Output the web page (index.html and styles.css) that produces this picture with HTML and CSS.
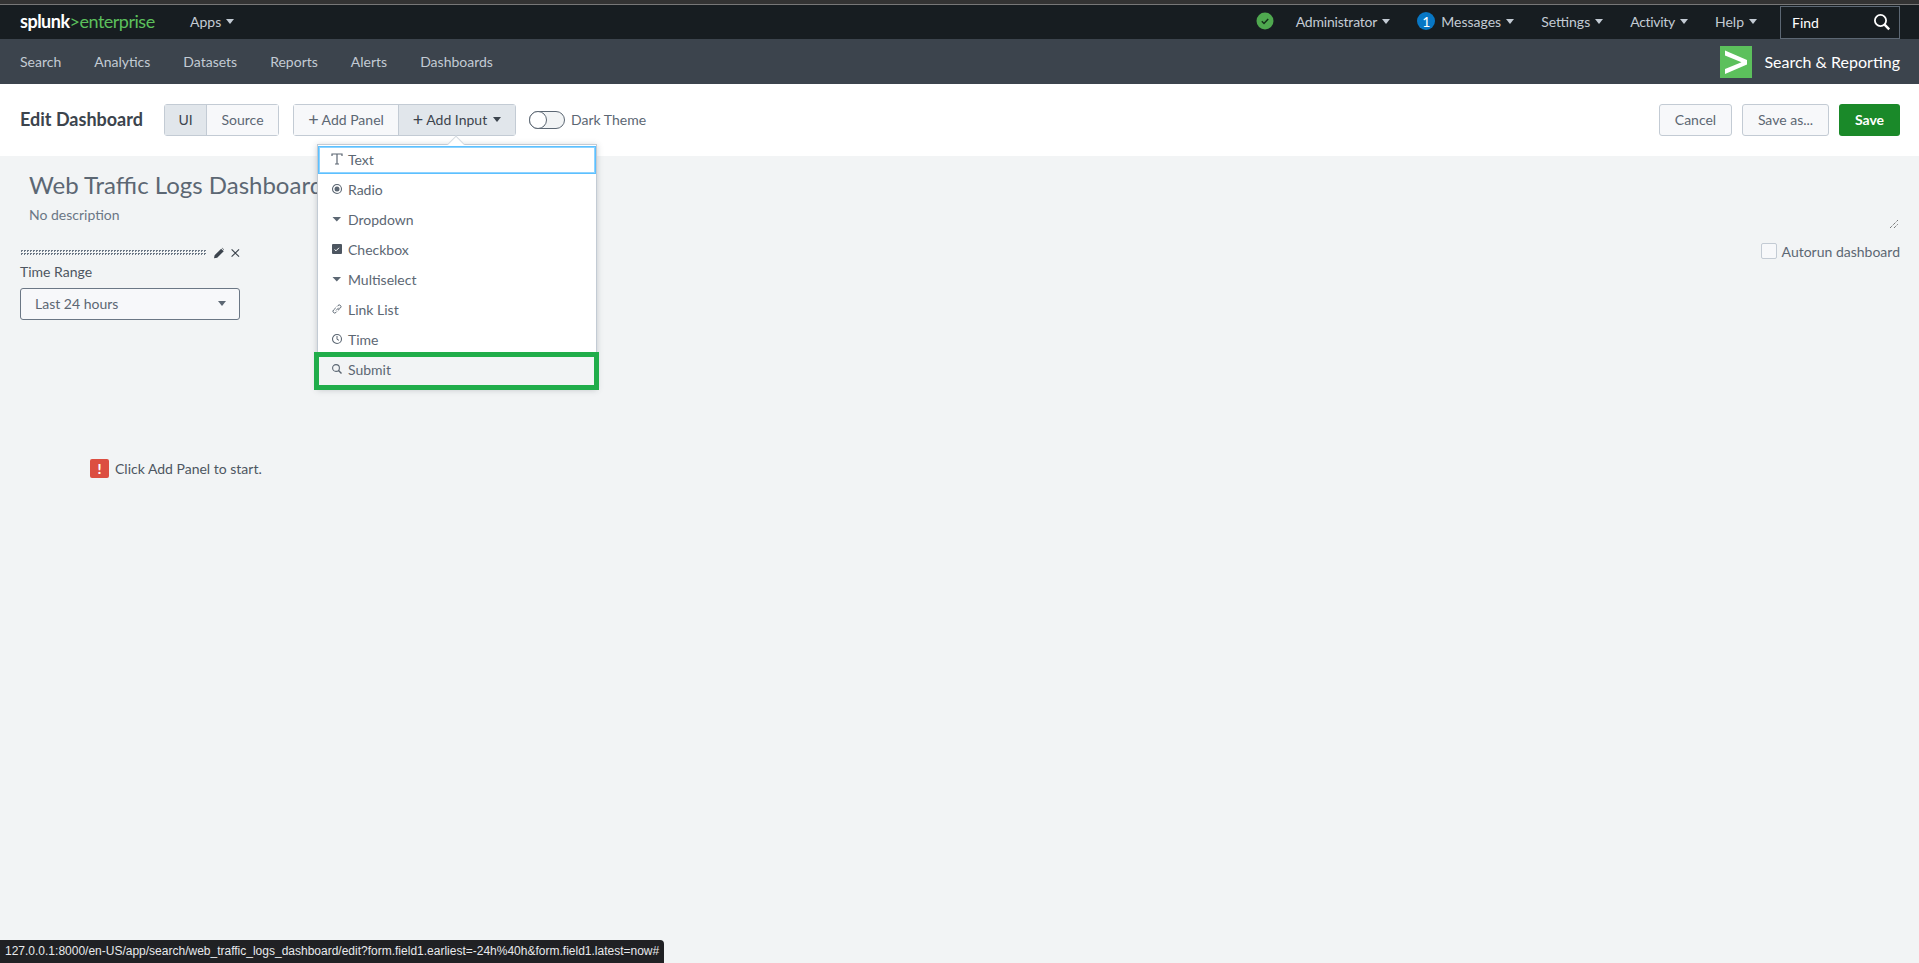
FILE: index.html
```html
<!DOCTYPE html>
<html lang="en">
<head>
<meta charset="utf-8">
<title>Edit Dashboard | Splunk</title>
<link rel="stylesheet" href="styles.css">
</head>
<body>
<div class="strip"></div>
<header class="nav">
  <div class="logo"><span class="logo-s">splunk</span><span class="logo-e">&gt;enterprise</span></div>
  <a class="nav-item apps">Apps <i class="caret"></i></a>
  <div class="nav-right">
    <span class="status"><svg viewBox="0 0 18 18" width="18" height="18"><circle cx="9" cy="9" r="8.5" fill="#4fa84f"/><path d="M5.8 9.3l2.2 2.2 4.2-4.6" fill="none" stroke="#14301a" stroke-width="1.5"/></svg></span>
    <a class="nav-item admin">Administrator <i class="caret"></i></a>
    <a class="nav-item"><span class="badge">1</span>Messages <i class="caret"></i></a>
    <a class="nav-item">Settings <i class="caret"></i></a>
    <a class="nav-item tight">Activity <i class="caret"></i></a>
    <a class="nav-item">Help <i class="caret"></i></a>
    <div class="find"><span>Find</span><svg viewBox="0 0 18 18" width="18" height="18"><circle cx="7.5" cy="7.5" r="5.6" fill="none" stroke="#fff" stroke-width="1.8"/><path d="M11.6 11.6l4.6 4.8" stroke="#fff" stroke-width="2.4"/></svg></div>
  </div>
</header>
<nav class="appbar">
  <a class="app-link">Search</a>
  <a class="app-link">Analytics</a>
  <a class="app-link">Datasets</a>
  <a class="app-link">Reports</a>
  <a class="app-link">Alerts</a>
  <a class="app-link">Dashboards</a>
  <div class="app-brand">
    <svg class="app-icon" viewBox="0 0 32 32" width="32" height="32"><rect width="32" height="32" fill="#5cc05c"/><path d="M5 4.500l22 9.500v4.500L5 28v-5l16.500-6.800L5 9.500z" fill="#fff"/></svg>
    <span class="app-name">Search &amp; Reporting</span>
  </div>
</nav>
<section class="toolbar">
  <h1 class="edit-title">Edit Dashboard</h1>
  <div class="btn-group mode">
    <a class="btn active ui">UI</a><a class="btn source">Source</a>
  </div>
  <div class="btn-group add">
    <a class="btn panel"><span class="plus">+</span> Add Panel</a><a class="btn active input"><span class="plus">+</span> Add Input <i class="caret dark"></i></a>
  </div>
  <div class="toggle"><i class="toggle-knob"></i></div>
  <span class="toggle-label">Dark Theme</span>
  <div class="actions">
    <a class="btn solo cancel">Cancel</a>
    <a class="btn solo saveas">Save as...</a>
    <a class="btn save">Save</a>
  </div>
</section>
<main class="main">
  <div class="title-wrap">
    <h2 class="dash-title">Web Traffic Logs Dashboard</h2>
    <p class="dash-desc">No description</p>
    <svg class="resize" viewBox="0 0 8 8" width="8" height="8"><path d="M0 8L8 0M4 8L8 4" stroke="#444" stroke-width="1" stroke-dasharray="1 1"/></svg>
  </div>
  <div class="form-row">
    <div class="input-box">
      <div class="input-head">
        <div class="drag"></div>
        <svg viewBox="0 0 12 12" width="12" height="12"><path d="M0 12l.7-3.300L8.300 1l3 3-7.600 7.400zM9 .3l.5-.3 2.500 2.500-.3.500z" fill="#3c444d"/></svg>
        <svg viewBox="0 0 10 10" width="10" height="10"><path d="M.7.7l8.600 8.600M9.300.7L.7 9.300" stroke="#3c444d" stroke-width="1.300"/></svg>
      </div>
      <label class="input-label">Time Range</label>
      <div class="select"><span>Last 24 hours</span><i class="caret gray"></i></div>
    </div>
    <label class="autorun"><i class="check"></i>Autorun dashboard</label>
  </div>
  <div class="notice">
    <span class="notice-icon">!</span>
    <span class="notice-text">Click Add Panel to start.</span>
  </div>
</main>

<div class="menu">
  <i class="menu-arrow"></i>
  <a class="menu-item focus"><svg viewBox="0 0 12 12" width="12" height="12"><path d="M1 3V1h10v2M6 1v10M4 11h4" fill="none" stroke="#5c6773" stroke-width="1.200"/></svg>Text</a>
  <a class="menu-item"><svg viewBox="0 0 12 12" width="12" height="12"><circle cx="6" cy="6" r="4.500" fill="none" stroke="#5c6773" stroke-width="1.100"/><circle cx="6" cy="6" r="2.500" fill="#5c6773"/></svg>Radio</a>
  <a class="menu-item"><svg viewBox="0 0 12 12" width="12" height="12"><path d="M1.500 4h8.500L5.800 8.500z" fill="#5c6773"/></svg>Dropdown</a>
  <a class="menu-item"><svg viewBox="0 0 12 12" width="12" height="12"><rect x="1" y="1" width="10" height="10" rx="1" fill="#4d5661"/><path d="M3.500 6.500l1.500 1.300 3-3" fill="none" stroke="#fff" stroke-width="1"/></svg>Checkbox</a>
  <a class="menu-item"><svg viewBox="0 0 12 12" width="12" height="12"><path d="M1.500 4h8.500L5.800 8.500z" fill="#5c6773"/></svg>Multiselect</a>
  <a class="menu-item"><svg viewBox="0 0 12 12" width="12" height="12"><path d="M5 7.500l2.800-2.800M4.800 4.800L2.500 7a1.700 1.700 0 0 0 2.400 2.500l1-1M7 7.300l2.500-2.400A1.700 1.700 0 0 0 7 2.500l-1 1" fill="none" stroke="#5c6773" stroke-width="1"/></svg>Link List</a>
  <a class="menu-item"><svg viewBox="0 0 12 12" width="12" height="12"><circle cx="6" cy="6" r="4.500" fill="none" stroke="#5c6773" stroke-width="1.100"/><path d="M6 3v3.300l2 1" fill="none" stroke="#5c6773" stroke-width="1"/></svg>Time</a>
  <a class="menu-item hover"><svg viewBox="0 0 12 12" width="12" height="12"><circle cx="5" cy="5" r="3.400" fill="none" stroke="#5c6773" stroke-width="1.100"/><path d="M7.500 7.500l3 3" stroke="#5c6773" stroke-width="1.400"/></svg>Submit</a>
</div>

<div class="statusbar">127.0.0.1:8000/en-US/app/search/web_traffic_logs_dashboard/edit?form.field1.earliest=-24h%40h&amp;form.field1.latest=now#</div>
</body>
</html>
```
FILE: styles.css
```css
* { box-sizing: border-box; }
html, body { height: 100%; }
body {
  margin: 0;
  height: 963px;
  overflow: hidden;
  display: flex;
  flex-direction: column;
  background: #f2f4f5;
  color: #3c444d;
  font-family: Lato, "Open Sans", "Liberation Sans", sans-serif;
  font-size: 14px;
}
.strip { height: 5px; background: #333; border-bottom: 1px solid #777; flex: none; }
.nav {
  flex: none; height: 34px; background: #171d21; color: #c3cbd4;
  display: flex; align-items: center; padding: 0 19px 2px 20px;
}
.logo { width: 170px; font-size: 18px; letter-spacing: -0.5px; white-space: nowrap; }
.logo-s { color: #fff; font-weight: 700; }
.logo-e { color: #5cc05c; }
.nav-item { display: flex; align-items: center; gap: 5px; font-size: 14px; white-space: nowrap; }
.caret {
  display: inline-block; width: 0; height: 0;
  border-left: 4px solid transparent; border-right: 4px solid transparent;
  border-top: 5px solid #c3cbd4;
}
.caret.dark { border-top-color: #3c444d; margin-left: 3px; }
.caret.gray { border-top-color: #5c6773; }
.nav-right { margin-left: auto; display: flex; align-items: center; gap: 27px; }
.status { display: flex; margin-right: -5px; }
.admin { letter-spacing: -0.2px; }
.tight { letter-spacing: -0.3px; }
.badge {
  width: 18px; height: 18px; border-radius: 50%; background: #0877c4; color: #fff;
  display: inline-flex; align-items: center; justify-content: center; font-size: 14px; margin-right: 1px;
}
.find {
  width: 120px; height: 33px; margin: 2px 0 0 -4px; border: 1px solid #5c6773; background: #171d21;
  display: flex; align-items: center; justify-content: space-between;
  padding: 0 8px 0 11px; color: #fff;
}
.appbar {
  flex: none; height: 45px; background: #3c444d; display: flex; align-items: center;
  padding: 0 19px 0 20px; gap: 33px; color: #c3cbd4;
}
.app-link { font-size: 14px; }
.app-brand { margin-left: auto; display: flex; align-items: center; gap: 12px; }
.app-name { color: #fff; font-size: 16px; }
.app-icon { display: block; }
.toolbar {
  flex: none; height: 72px; background: #fff; display: flex; align-items: center; padding: 0 19px 0 20px;
}
.edit-title { margin: 0 20px 2px 0; font-size: 18px; font-weight: 700; width: 124px; white-space: nowrap; color: #3c444d; }
.btn-group { display: flex; height: 32px; border: 1px solid #c3cbd4; border-radius: 3px; }
.btn {
  display: flex; align-items: center; justify-content: center; background: #f7f8fa; color: #5c6773;
  font-size: 14px; white-space: nowrap; padding-bottom: 2px;
}
.btn.active { background: #e1e6eb; color: #3c444d; }
.mode .ui { width: 42px; border-right: 1px solid #c3cbd4; }
.mode .source { width: 71px; }
.add { margin-left: 14px; }
.add .panel { width: 105px; border-right: 1px solid #c3cbd4; gap: 3px; }
.add .input { width: 116px; gap: 3px; }
.plus { font-size: 18px; line-height: 1; }
.toggle {
  margin-left: 13px; width: 36px; height: 18px; border: 1px solid #5c6773; border-radius: 9px; background: #f2f4f5; position: relative;
}
.toggle-knob {
  display: block; width: 18px; height: 18px; margin: -1px 0 0 -1px; border: 1px solid #5c6773; border-radius: 50%; background: #fff;
}
.toggle-label { margin: 0 0 1px 6px; font-size: 14px; color: #5c6773; }
.actions { margin-left: auto; display: flex; gap: 10px; }
.solo { height: 32px; border: 1px solid #c3cbd4; border-radius: 3px; }
.cancel { width: 73px; }
.saveas { width: 87px; }
.save { width: 61px; height: 32px; background: #1a8929; color: #fff; font-weight: 700; border-radius: 3px; }
.main { flex: 1; padding: 0 19px 0 20px; }
.title-wrap { position: relative; padding: 14px 0 0 9px; height: 90px; }
.dash-title { margin: 0; font-size: 24px; font-weight: 400; line-height: 30px; color: #5c6773; white-space: nowrap; }
.dash-desc { margin: 6px 0 0; font-size: 14px; line-height: 18px; color: #6b7785; }
.resize { position: absolute; right: 2px; top: 64px; }
.form-row { display: flex; justify-content: space-between; align-items: flex-start; }
.input-box { width: 220px; }
.input-head { display: flex; align-items: center; gap: 7px; height: 14px; }
.drag {
  flex: none; width: 187px; height: 6px;
  background-image: conic-gradient(#6b7785 25%, transparent 0);
  background-size: 3px 3px;
}
.input-label { display: block; margin-top: 3px; font-size: 14px; line-height: 18px; color: #4d5661; }
.select {
  margin-top: 7px; height: 32px; border: 1px solid #6b7785; border-radius: 3px; background: #f7f8fa;
  display: flex; align-items: center; justify-content: space-between; padding: 0 13px 2px 14px; color: #5c6773; font-size: 14px;
}
.autorun { display: flex; align-items: center; gap: 5px; margin-top: -3px; font-size: 14px; color: #5c6773; height: 16px; }
.check { width: 16px; height: 16px; border: 1px solid #c3cbd4; border-radius: 2px; background: #f7f8fa; }
.notice { display: flex; align-items: center; gap: 6px; margin: 139px 0 0 70px; }
.notice-icon {
  width: 19px; height: 19px; border-radius: 2px; background: #dc4e41; color: #fff; font-weight: 900; font-size: 14px;
  display: flex; align-items: center; justify-content: center;
}
.notice-text { font-size: 14px; color: #4d5661; }
.menu {
  position: absolute; left: 317px; top: 144px; width: 280px; height: 245px; padding: 1px 0;
  background: #fff; border: 1px solid #c3cbd4; box-shadow: 0 1px 6px rgba(60, 68, 77, .25);
}
.menu-arrow {
  position: absolute; left: 132px; top: -7px; width: 12px; height: 12px; background: #fff;
  border-left: 1px solid #d5dbe1; border-top: 1px solid #d5dbe1; transform: rotate(45deg);
}
.menu-item {
  position: relative; display: flex; align-items: center; gap: 5px; height: 30px; padding-left: 13px; color: #5c6773; font-size: 14px;
}
.menu-item.focus { height: 28px; padding: 0 0 2px 12px; border: 1px solid #5cc0ff; box-shadow: inset 0 0 0 1px #8fd3ff; }
.menu-item.hover {
  position: absolute; left: -4px; top: 207px; width: 285px; height: 38px;
  background: #f2f4f5; border: 5px solid #20ad4a; padding: 0 0 4px 12px;
}
.statusbar {
  position: absolute; left: 0; bottom: 0; height: 23px; width: 664px; padding: 0 0 0 5px; background: #202124; color: #e8eaed;
  font-family: "Liberation Sans", Arial, sans-serif; font-size: 12px; line-height: 23px; white-space: nowrap; border-top-right-radius: 4px; overflow: hidden;
}
```
